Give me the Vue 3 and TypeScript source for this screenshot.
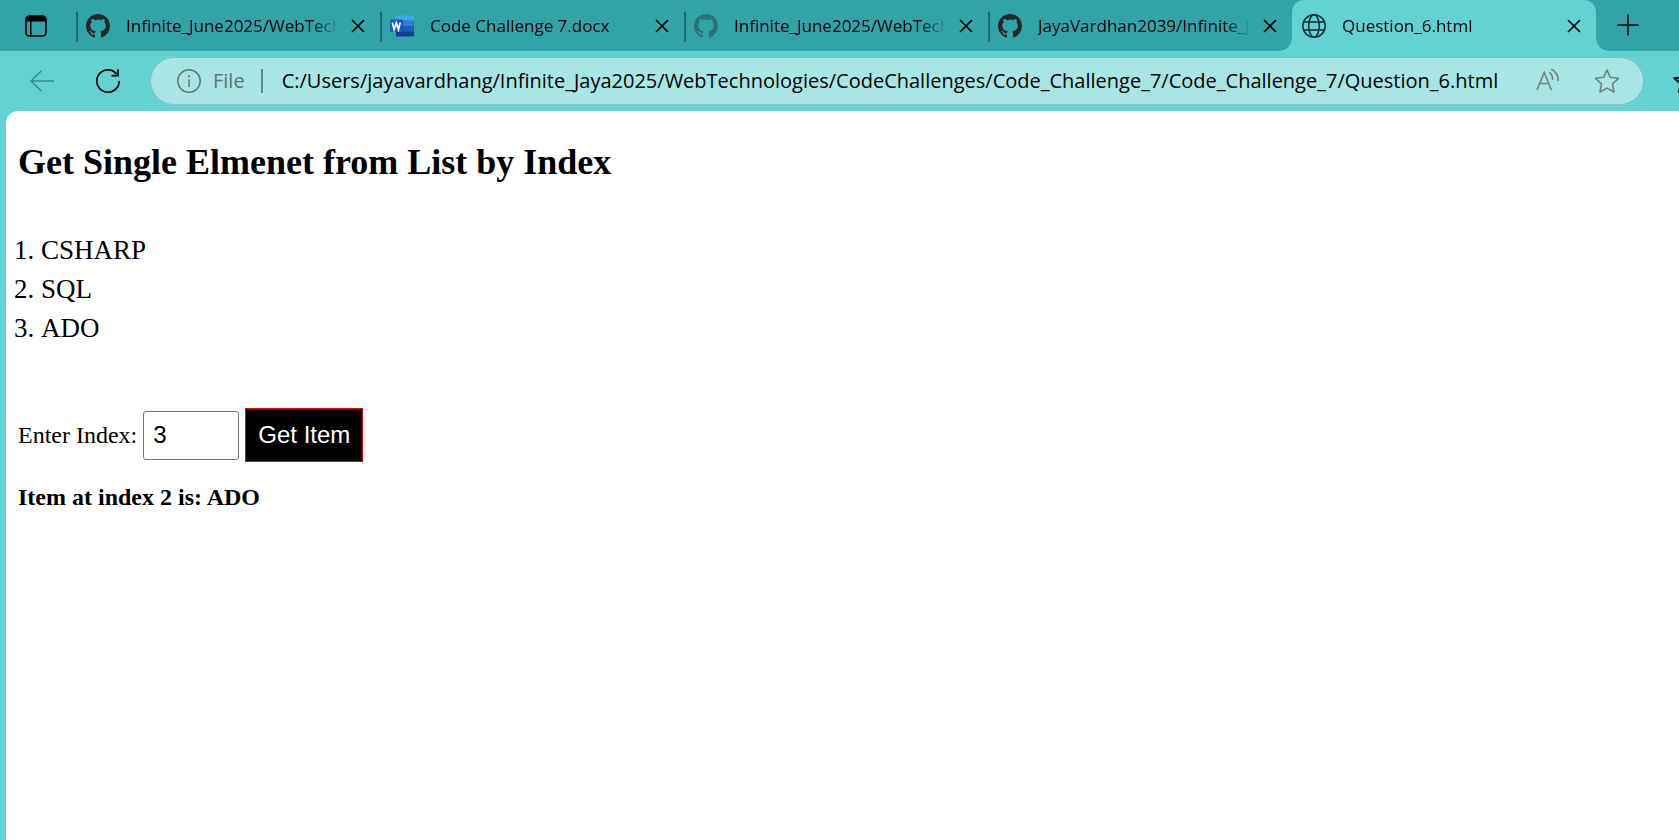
<script setup lang="ts">
import { ref } from 'vue'

interface Tab {
  id: number
  title: string
  icon: 'github' | 'word' | 'globe'
  faded?: boolean
  active?: boolean
}

const tabs: Tab[] = [
  { id: 1, title: 'Infinite_June2025/WebTechnologies', icon: 'github' },
  { id: 2, title: 'Code Challenge 7.docx', icon: 'word' },
  { id: 3, title: 'Infinite_June2025/WebTechnologies', icon: 'github', faded: true },
  { id: 4, title: 'JayaVardhan2039/Infinite_Jaya2025', icon: 'github' },
  { id: 5, title: 'Question_6.html', icon: 'globe', active: true },
]

const url = ref(
  'C:/Users/jayavardhang/Infinite_Jaya2025/WebTechnologies/CodeChallenges/Code_Challenge_7/Code_Challenge_7/Question_6.html',
)
const items: string[] = ['CSHARP', 'SQL', 'ADO']
const index = ref('3')
const result = ref('Item at index 2 is: ADO')

function getItem(): void {
  const position = Number(index.value) - 1
  const item = items[position]
  result.value = item ? `Item at index ${position} is: ${item}` : 'Invalid index'
}
</script>

<template>
  <div class="browser">
    <header class="tab-bar">
      <button class="icon-button tab-menu" aria-label="Tab actions menu">
        <svg width="22" height="22" viewBox="0 0 22 22">
          <rect x="1" y="1" width="20" height="20" rx="3.5" fill="none" stroke="#000" stroke-width="1.6" />
          <path d="M1 6.5V4a3 3 0 0 1 3-3h14a3 3 0 0 1 3 3v2.500z" fill="#000" />
          <path d="M5.800 6v15" stroke="#000" stroke-width="1.400" />
        </svg>
      </button>
      <nav class="tabs">
        <div v-for="tab in tabs" :key="tab.id" class="tab" :class="{ active: tab.active }">
          <svg v-if="tab.icon === 'github'" class="favicon" :class="{ faded: tab.faded }" viewBox="0 0 16 16">
            <path
              fill="#24292f"
              d="M8 0C3.580 0 0 3.580 0 8c0 3.540 2.290 6.530 5.470 7.590.4.070.55-.170.55-.380 0-.190-.010-.820-.010-1.490-2.010.370-2.530-.490-2.690-.940-.090-.230-.480-.940-.820-1.130-.280-.150-.680-.520-.010-.530.630-.010 1.080.580 1.230.820.720 1.210 1.870.870 2.330.660.070-.520.280-.870.510-1.070-1.780-.2-3.640-.890-3.640-3.950 0-.870.310-1.590.820-2.150-.080-.2-.360-1.020.080-2.120 0 0 .670-.210 2.200.820.640-.180 1.320-.270 2-.270s1.360.090 2 .270c1.530-1.040 2.200-.820 2.200-.820.440 1.100.160 1.920.080 2.120.510.560.820 1.270.820 2.150 0 3.070-1.870 3.750-3.650 3.950.290.250.540.730.540 1.480 0 1.070-.010 1.930-.010 2.200 0 .210.150.460.550.380A8.010 8.010 0 0 0 16 8c0-4.420-3.580-8-8-8z"
            />
          </svg>
          <svg v-else-if="tab.icon === 'word'" class="favicon" viewBox="0 0 24 24">
            <path d="M6 6.500V2.500a1 1 0 0 1 1-1h16a1 1 0 0 1 1 1v4z" fill="#41a5ee" />
            <path d="M6 6.500h18V12H6z" fill="#2b7cd3" />
            <path d="M6 12h18v5.300H6z" fill="#185abd" />
            <path d="M6 17.300h18v4.200a1 1 0 0 1-1 1H7a1 1 0 0 1-1-1z" fill="#103f91" />
            <path d="M6 6h6a1 1 0 0 1 1 1v12H6z" fill="#0c3578" opacity=".4" />
            <rect y="5.500" width="12.500" height="12.500" rx="1" fill="#185abd" />
            <path d="M2.300 8.500l1.800 7 2.200-6.500 2.200 6.500 1.700-7" fill="none" stroke="#fff" stroke-width="1.700" />
          </svg>
          <svg v-else class="favicon" viewBox="0 0 24 24" fill="none" stroke="#0d2d2e" stroke-width="1.500">
            <circle cx="12" cy="12" r="11.200" />
            <ellipse cx="12" cy="12" rx="5.300" ry="11.200" />
            <path d="M1.800 8h20.400M1.800 16h20.400" />
          </svg>
          <span class="tab-title">{{ tab.title }}</span>
          <button class="icon-button close" :aria-label="`Close ${tab.title}`">
            <svg width="14" height="14" viewBox="0 0 14 14">
              <path d="M1 1l12 12M13 1L1 13" stroke="#000" stroke-width="1.600" />
            </svg>
          </button>
        </div>
      </nav>
      <button class="icon-button new-tab" aria-label="New tab">
        <svg width="22" height="22" viewBox="0 0 22 22">
          <path d="M11 .5v21M.5 11h21" stroke="#000" stroke-width="1.500" />
        </svg>
      </button>
    </header>

    <div class="toolbar">
      <button class="icon-button back" aria-label="Back">
        <svg width="24" height="22" viewBox="0 0 24 22" fill="none" stroke="#3f8a8b" stroke-width="1.500">
          <path d="M24 11H1M11.500 .7L1 11l10.500 10.300" />
        </svg>
      </button>
      <button class="icon-button reload" aria-label="Refresh">
        <svg width="24" height="24" viewBox="0 0 24 24" fill="none" stroke="#000" stroke-width="1.700">
          <path d="M23.200 12A11.200 11.200 0 1 1 20.700 5" />
          <path d="M22 .3v6.400h-6.500" />
        </svg>
      </button>
      <div class="address">
        <svg width="24" height="24" viewBox="0 0 24 24" fill="none" stroke="#667072" stroke-width="1.500">
          <circle cx="12" cy="12" r="11.200" />
          <path d="M12 10.500v7.500" />
          <circle cx="12" cy="7.300" r="1.100" fill="#667072" stroke="none" />
        </svg>
        <span class="scheme">File</span>
        <span class="rule"></span>
        <input v-model="url" class="url" type="text" aria-label="Address" spellcheck="false" />
        <button class="icon-button read" aria-label="Read aloud">
          <svg width="24" height="24" viewBox="0 0 24 24" fill="none" stroke="#757f80" stroke-width="1.600">
            <path d="M1 21L8.200 3.500 15.400 21M3.800 14.500h8.800" />
            <path d="M13.300 3.500c2.300 1.500 3.500 4.200 3.200 7.300M15 0c4.700 2.300 7.300 6.700 7 12" />
          </svg>
        </button>
        <button class="icon-button" aria-label="Add to favourites">
          <svg width="26" height="26" viewBox="0 0 26 26" fill="none" stroke="#757f80" stroke-width="1.600" stroke-linejoin="round">
            <path d="M13 2l3.300 7.300 8.200 1-6 5.600 1.500 8.100L13 20.100 6 24l1.500-8.100-6-5.600 8.200-1z" />
          </svg>
        </button>
      </div>
      <button class="icon-button favourites" aria-label="Favourites">
        <svg width="26" height="26" viewBox="0 0 26 26" fill="none" stroke="#000" stroke-width="2" stroke-linejoin="round">
          <path d="M13 2l3.300 7.300 8.200 1-6 5.600 1.500 8.100L13 20.100 6 24l1.500-8.100-6-5.600 8.200-1z" />
        </svg>
      </button>
    </div>

    <main class="page">
      <h2>Get Single Elmenet from List by Index</h2>
      <ol>
        <li v-for="item in items" :key="item">{{ item }}</li>
      </ol>
      <form @submit.prevent="getItem">
        <label for="index">Enter Index:</label>
        <input id="index" v-model="index" type="text" />
        <button type="submit">Get Item</button>
      </form>
      <p class="result">{{ result }}</p>
    </main>
  </div>
</template>

<style>
body {
  margin: 0;
}
</style>

<style scoped>
.browser {
  display: flex;
  flex-direction: column;
  min-height: 100vh;
  overflow: hidden;
  background: #62d2d3;
  font-family: 'Open Sans', 'Noto Sans', sans-serif;
  color: #000;
}

.icon-button {
  display: flex;
  flex: none;
  align-items: center;
  justify-content: center;
  padding: 0;
  border: 0;
  background: none;
}

.tab-bar {
  display: flex;
  height: 51px;
  background: #32a4a8;
}

.tab-menu {
  width: 76px;
  padding-right: 4px;
}

.tabs {
  display: flex;
  flex: 0 1 1520px;
  min-width: 0;
}

.tab {
  position: relative;
  display: flex;
  flex: 1 1 0;
  align-items: center;
  box-sizing: border-box;
  min-width: 0;
  padding: 0 15px 0 10px;
}

.tab:not(.active)::before {
  content: '';
  position: absolute;
  left: 0;
  top: 12px;
  width: 2px;
  height: 30px;
  background: #1d686a;
}

.tab.active {
  border-radius: 12px 12px 0 0;
  background: #62d2d3;
}

.tab.active::before,
.tab.active::after {
  content: '';
  position: absolute;
  bottom: 0;
  width: 12px;
  height: 12px;
}

.tab.active::before {
  right: 100%;
  background: radial-gradient(circle at 0 0, transparent 11px, #62d2d3 12px);
}

.tab.active::after {
  left: 100%;
  background: radial-gradient(circle at 100% 0, transparent 11px, #62d2d3 12px);
}

.favicon {
  flex: none;
  width: 24px;
  height: 24px;
}

.favicon.faded {
  opacity: 0.4;
}

.tab-title {
  flex: 1;
  min-width: 0;
  margin: 0 12px 0 16px;
  overflow: hidden;
  font-size: 17px;
  line-height: 24px;
  white-space: nowrap;
  mask-image: linear-gradient(to right, #000 calc(100% - 28px), transparent);
}

.new-tab {
  width: 64px;
  padding-bottom: 2px;
}

.toolbar {
  display: flex;
  align-items: center;
  height: 60px;
}

.back {
  margin-left: 30px;
}

.reload {
  margin-left: 42px;
}

.address {
  display: flex;
  flex: 1;
  align-items: center;
  box-sizing: border-box;
  height: 48px;
  min-width: 0;
  margin: 0 29px 0 30px;
  padding: 0 23px 0 26px;
  border: 1px solid #86bfc0;
  border-radius: 24px;
  background: #a8e6e5;
}

.scheme {
  margin-left: 12px;
  font-size: 20px;
  line-height: 28px;
  color: #667072;
}

.rule {
  width: 2px;
  height: 24px;
  margin: 0 19px 0 16px;
  background: #668b8c;
}

.url {
  flex: 1;
  min-width: 0;
  padding: 0;
  border: 0;
  outline: 0;
  background: none;
  font-family: inherit;
  font-size: 20px;
  line-height: 28px;
  color: #000;
}

.read {
  margin: 0 34px 0 24px;
}

.favourites {
  margin-right: -20px;
}

.page {
  flex: 1;
  margin-left: 6px;
  padding: 30px 12px;
  border-radius: 12px 0 0 0;
  background: #fff;
  font-family: 'Liberation Serif', serif;
  font-size: 24px;
}

h2 {
  margin: 0;
  font-size: 36px;
  line-height: 42px;
}

ol {
  margin: 48px 0 60px;
  padding-left: 23px;
  font-size: 27px;
  line-height: 39px;
}

form {
  display: flex;
  align-items: center;
  gap: 6px;
}

#index {
  box-sizing: border-box;
  width: 96px;
  height: 49px;
  padding: 0 9px;
  border: 1px solid #767676;
  border-radius: 3px;
  font-family: 'Liberation Sans', sans-serif;
  font-size: 24px;
}

form button {
  height: 54px;
  padding: 0 12px;
  border: 1px solid #f00;
  background: #000;
  font-family: 'Liberation Sans', sans-serif;
  font-size: 24px;
  color: #fff;
}

.result {
  margin: 21px 0 0;
  font-weight: bold;
  line-height: 28px;
}
</style>
